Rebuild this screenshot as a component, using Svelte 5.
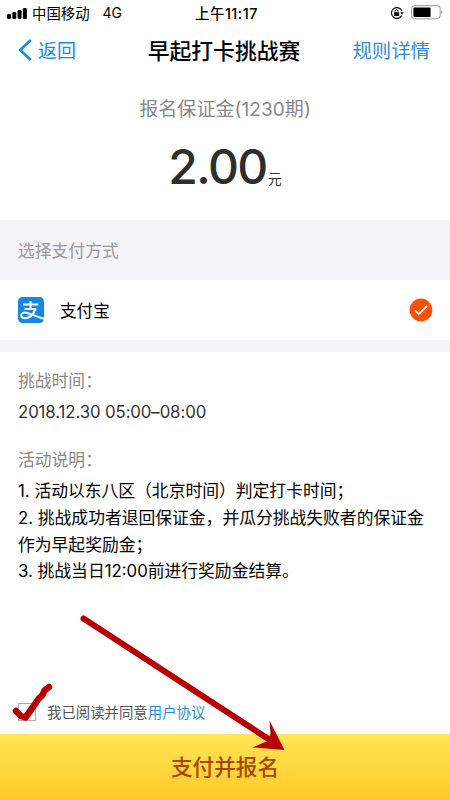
<script>
    let agreed = $state(false);

    const signal = [5, 7, 9, 11];

    const rules = [
        "1. 活动以东八区（北京时间）判定打卡时间；",
        "2. 挑战成功者退回保证金，并瓜分挑战失败者的保证金",
        "作为早起奖励金；",
        "3. 挑战当日12:00前进行奖励金结算。",
    ];
</script>

<div class="page">
    <div class="status">
        <div class="carrier">
            <svg class="signal" width="21" height="12" viewBox="0 0 21 12">
                {#each signal as h, i}
                    <rect x={i * 5.3} y={12 - h} width="4" height={h} rx="1.2" />
                {/each}
            </svg>
            <span class="name">中国移动</span>
            <span class="net">4G</span>
        </div>
        <div class="clock">上午11:17</div>
        <div class="power">
            <svg width="14" height="14" viewBox="0 0 14 14">
                <path
                    d="M11.6 9.6A5.4 5.4 0 1 1 11.9 5"
                    fill="none"
                    stroke="#111"
                    stroke-width="1.2"
                />
                <path d="M10.3 6.2h3.5l-1.8 2.6z" fill="#111" />
                <rect x="4" y="6.2" width="5.2" height="3.8" rx=".5" fill="#111" />
                <path
                    d="M5.1 6.4V5.2a1.5 1.5 0 0 1 3 0v1.2"
                    fill="none"
                    stroke="#111"
                    stroke-width="1"
                />
            </svg>
            <svg width="33" height="15" viewBox="0 0 33 15">
                <rect
                    x=".6"
                    y=".6"
                    width="28.6"
                    height="13.2"
                    rx="3.2"
                    fill="#fff"
                    stroke="#999"
                />
                <rect x="2.4" y="2.4" width="17.2" height="9.6" rx="1" fill="#000" />
                <path d="M30.4 5.2q2 2 0 4.2z" fill="#888" />
            </svg>
        </div>
    </div>

    <header>
        <button class="back">
            <svg width="14" height="22" viewBox="0 0 14 22">
                <path d="M12.8 1 2.2 11l10.6 10" fill="none" stroke="#108ee9" stroke-width="2.6" />
            </svg>
            <span>返回</span>
        </button>
        <h1>早起打卡挑战赛</h1>
        <a class="detail" href="#detail">规则详情</a>
    </header>

    <section class="deposit">
        <div class="label">报名保证金(1230期)</div>
        <div class="amount"><span class="num">2.00</span><span class="unit">元</span></div>
    </section>

    <div class="method-title">选择支付方式</div>
    <div class="method">
        <svg width="26" height="26" viewBox="0 0 26 26">
            <rect width="26" height="26" rx="4.5" fill="#1588e6" />
            <g fill="none" stroke="#fff" stroke-width="2">
                <path d="M5 7.6h15.4M12.6 4v8M6.6 12h11.8" />
                <path
                    d="M17.4 12c-1.8 4.4-5.4 8.8-9.6 9.2-2.8.2-4.6-.8-4.6-2.8 0-2.2 2.2-3.2 4.8-2.6 4.4 1 10 3.4 18 6"
                />
            </g>
        </svg>
        <span>支付宝</span>
        <svg class="picked" width="24" height="24" viewBox="0 0 24 24">
            <circle cx="12" cy="12" r="11.4" fill="#ff5000" />
            <path d="M6 12.4l3.8 3.8 8.2-8.4" fill="none" stroke="#fff" stroke-width="1.9" />
        </svg>
    </div>
    <div class="gap"></div>

    <section class="info">
        <div class="caption">挑战时间：</div>
        <div class="time">2018.12.30 05:00–08:00</div>
        <div class="caption second">活动说明：</div>
        <div class="rules">
            {#each rules as line}
                <p>{line}</p>
            {/each}
        </div>
    </section>

    <div class="agree">
        <input type="checkbox" bind:checked={agreed} />
        <span>我已阅读并同意<a href="#terms">用户协议</a></span>
    </div>
    <button class="pay">支付并报名</button>

    <!-- hand drawn hints: tick the box, then press the button -->
    <svg class="marks" width="450" height="800" viewBox="0 0 450 800">
        <path
            d="M83.5 618.5 270 740"
            stroke="#b80000"
            stroke-width="6"
            stroke-linecap="round"
        />
        <path d="M284.5 750 252.5 747.5 267.5 741 270.5 734 269.5 720.5z" fill="#b80000" />
        <path
            d="M16 711l5 5 4.5 1.5 5-7 4.5-6.5 3.5-5 4-4 2-4.500 4.500-3.500"
            fill="none"
            stroke="#b80000"
            stroke-width="6.5"
            stroke-linecap="round"
            stroke-linejoin="round"
        />
    </svg>
</div>

<style>
    :global(body) {
        margin: 0;
        background: #fff;
    }

    .page {
        position: relative;
        display: flex;
        flex-direction: column;
        width: 450px;
        height: 800px;
        overflow: hidden;
        background: #fff;
        color: #000;
        font-family: Inter, "Noto Sans CJK SC", sans-serif;
        white-space: nowrap;
    }

    button {
        border: 0;
        padding: 0;
        background: none;
        font-family: inherit;
    }

    a {
        color: #2b8de3;
        text-decoration: none;
    }

    .status {
        display: grid;
        grid-template-columns: 1fr auto 1fr;
        align-items: center;
        height: 25px;
        padding: 0 6px 0 7px;
        font-size: 14.4px;
    }

    .carrier,
    .power {
        display: flex;
        align-items: center;
    }

    .name {
        margin-left: 4px;
    }

    .net {
        margin-left: 13px;
        font-size: 14px;
    }

    .clock {
        padding-left: 2px;
        font-weight: 500;
        letter-spacing: 0.5px;
    }

    .power {
        justify-content: flex-end;
        gap: 7px;
    }

    header {
        display: grid;
        grid-template-columns: 1fr auto 1fr;
        align-items: center;
        height: 49px;
        padding: 0 20px 1px 18px;
    }

    .back {
        display: flex;
        align-items: center;
        gap: 6px;
        color: #108ee9;
        font-size: 19px;
    }

    h1 {
        margin: 0;
        font-size: 21.8px;
        font-weight: 500;
    }

    .detail {
        justify-self: end;
        font-size: 19.4px;
    }

    .deposit {
        height: 145px;
        text-align: center;
    }

    .label {
        padding-top: 19px;
        color: #888;
        font-size: 19.1px;
        line-height: 30px;
    }

    .amount {
        margin-top: 18px;
        color: #2e2e2e;
        line-height: 50px;
    }

    .num {
        font-size: 48px;
        font-weight: 500;
        letter-spacing: -1.6px;
    }

    .unit {
        margin-left: 1px;
        font-size: 14px;
    }

    .method-title {
        height: 60px;
        padding-left: 18px;
        background: #f3f3f8;
        color: #999;
        font-size: 16.8px;
        line-height: 62px;
    }

    .method {
        display: flex;
        align-items: center;
        height: 60px;
        padding: 0 17px 0 18px;
        font-size: 16.6px;
    }

    .method span {
        margin-left: 16px;
    }

    .picked {
        margin-left: auto;
    }

    .gap {
        height: 12px;
        background: #f3f3f8;
    }

    .info {
        flex: 1;
        padding: 16px 18px 0;
        font-size: 16.8px;
    }

    .caption {
        color: #888;
        line-height: 26px;
    }

    .time {
        margin-top: 5px;
        color: #333;
        letter-spacing: -0.1px;
        line-height: 26px;
    }

    .second {
        margin-top: 22px;
    }

    .rules {
        margin-top: 5.4px;
    }

    p {
        margin: 0;
        line-height: 26.6px;
    }

    .agree {
        display: flex;
        align-items: center;
        height: 44px;
        padding-left: 18px;
        color: #555;
        font-size: 14.4px;
    }

    .agree input {
        appearance: none;
        box-sizing: border-box;
        width: 18px;
        height: 18px;
        margin: 0 11px 0 0;
        border: 1px solid #aaa;
        background: #fff;
    }

    .agree span {
        padding-bottom: 1px;
    }

    .pay {
        height: 66px;
        padding-bottom: 4px;
        background: linear-gradient(#ffe554, #ffca2a);
        color: #a94600;
        font-size: 21.6px;
        font-weight: 500;
    }

    .marks {
        position: absolute;
        top: 0;
        left: 0;
        pointer-events: none;
    }
</style>
